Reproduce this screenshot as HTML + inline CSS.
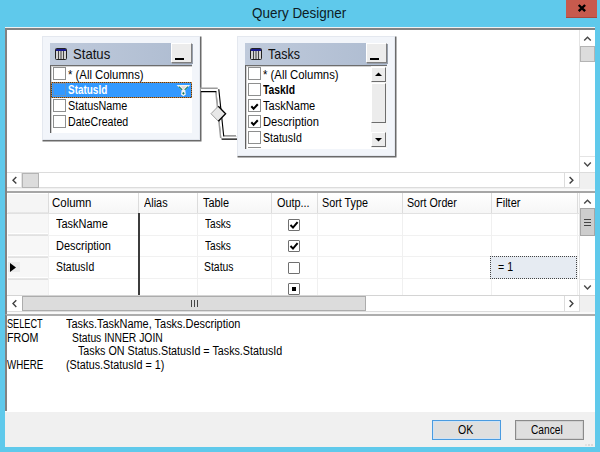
<!DOCTYPE html>
<html><head><meta charset="utf-8">
<style>
*{box-sizing:border-box;margin:0;padding:0}
html,body{width:600px;height:452px;overflow:hidden}
body{background:#5fc9eb;font-family:"Liberation Sans",sans-serif;font-size:12px;color:#000;position:relative}
.abs,.t,.b{position:absolute}
.t{white-space:nowrap;line-height:1;transform-origin:0 0}
#client{left:5px;top:27px;width:590px;height:420px;background:#f0f0f0}
#close{left:566px;top:0;width:31px;height:18px;background:#c75a4d;border-bottom:1px solid #a9473c}
.pane{background:#fff;border-top:2px solid #828282;border-left:2px solid #828282}
/* scrollbars */
.sb{background:#fff}
.sbtn{background:#fff;border:1px solid #dadada}
.thumb{background:#dcdcdc;border:1px solid #b4b4b4}
.corner{background:#f0f0f0}
/* table boxes */
.tbox{background:#f2f5fa;border:1px solid #e4e8ef;box-shadow:1px 1px 0 0.5px #6a6a6a}
.thead{background:linear-gradient(90deg,#bfcadb,#aebcd1);height:22px}
.ticon{position:absolute;left:5px;top:4.5px;width:12px;height:12px}
.minb{position:absolute;right:0;top:0;width:21px;height:20px;background:#ececec;border-top:1px solid #fff;border-left:1px solid #fff;border-right:1px solid #7e7e7e;border-bottom:1px solid #7e7e7e;box-shadow:1px 1px 0 #98a0ad}
.minb i{position:absolute;left:3px;top:14px;width:9px;height:2px;background:#000}
.list{background:#fff;border-top:1px solid #6d6d6d;border-left:1px solid #606060;box-shadow:inset 1px 1px 0 #d0d0d0;overflow:hidden}
.cb{position:absolute;width:13px;height:13px;border:1px solid #8e8f8f;background:#fff}
.ck{position:absolute;left:0;top:0}.ck12{position:absolute;left:0;top:0}
.selrow{background:#3399ff;box-shadow:inset 0 0 0 1px #4a3a2a;outline:1px dotted #c8853f;outline-offset:-1px}
/* 3d classic scroll buttons */
.c3{background:#ececec;border-top:1px solid #fff;border-left:1px solid #fff;border-right:1px solid #6d6d6d;border-bottom:1px solid #6d6d6d}
/* grid */
.hl{background:#f0f0f0;height:1px}
.vl{background:#e6e6e6;width:1px}
.rh{background:#f6f6f6;border:1px solid #fbfbfb}
#bottom{left:5px;top:411px;width:590px;height:36px;background:#f0f0f0;border-top:1px solid #fff}
.btn{height:20px;border:1px solid #acacac;background:#dfdfdf}
</style></head><body>
<div class="abs" id="client"></div>
<div class="abs" id="close"><svg width="31" height="18" viewBox="0 0 31 18"><path d="M12.7 5L19.1 11.2M19.1 5L12.7 11.2" stroke="#000" stroke-width="2.4"/></svg></div>

<!-- ===== diagram pane ===== -->
<div class="abs pane" style="left:5px;top:28px;width:590px;height:160px"></div>
<!-- v scrollbar -->
<div class="abs" style="left:579px;top:30px;width:1px;height:143px;background:#e4e4e4"></div>
<div class="abs thumb" style="left:580px;top:46px;width:15px;height:16px"></div>
<svg class="abs" style="left:580px;top:30px" width="15" height="16"><path d="M4.2 10.6L7.5 7.3L10.8 10.6" fill="none" stroke="#484848" stroke-width="1.4"/></svg>
<div class="abs" style="left:580px;top:156px;width:15px;height:1px;background:#e4e4e4"></div>
<svg class="abs" style="left:580px;top:157px" width="15" height="16"><path d="M4.2 5.6L7.5 8.9L10.8 5.6" fill="none" stroke="#484848" stroke-width="1.4"/></svg>
<!-- h scrollbar -->
<div class="abs" style="left:7px;top:172px;width:588px;height:1px;background:#dcdcdc"></div>
<div class="abs" style="left:7px;top:187px;width:573px;height:1px;background:#dcdcdc"></div>
<div class="abs corner" style="left:580px;top:173px;width:15px;height:15px"></div>
<div class="abs" style="left:579px;top:172px;width:1px;height:16px;background:#dcdcdc"></div>
<div class="abs" style="left:21px;top:173px;width:1px;height:14px;background:#e4e4e4"></div>
<div class="abs" style="left:564px;top:173px;width:1px;height:14px;background:#dcdcdc"></div>
<div class="abs thumb" style="left:22px;top:173px;width:17px;height:15px"></div>
<svg class="abs" style="left:7px;top:173px" width="15" height="15"><path d="M9.3 3.9L6 7.2L9.3 10.5" fill="none" stroke="#404040" stroke-width="1.4"/></svg>
<svg class="abs" style="left:565px;top:173px" width="15" height="15"><path d="M4.6 3.9L7.9 7.2L4.6 10.5" fill="none" stroke="#404040" stroke-width="1.4"/></svg>

<!-- Status box -->
<div class="abs tbox" style="left:42px;top:36px;width:158px;height:104px"></div>
<div class="abs thead" style="left:50px;top:43px;width:142px"><svg class="ticon" viewBox="0 0 12 12"><rect x="0.5" y="0.5" width="11" height="11" rx="1" fill="#d4d4d4" stroke="#222"/><rect x="1" y="1" width="10" height="2" fill="#1a1a8c"/><path d="M3.5 3v8M6 3v8M8.5 3v8" stroke="#444" stroke-width="1"/></svg><div class="minb"><i></i></div></div>
<div class="abs list" style="left:50px;top:65px;width:142px;height:68px"></div>
<div class="abs selrow" style="left:51px;top:82px;width:141px;height:16px"></div>
<div class="cb" style="left:53px;top:67px"></div>
<div class="cb" style="left:53px;top:83px;background:#3399ff;border-color:#5f93c9"></div>
<div class="cb" style="left:53px;top:99px"></div>
<div class="cb" style="left:53px;top:115px"></div>
<!-- filter icon -->
<svg class="abs" style="left:176px;top:84px" width="15" height="13" viewBox="0 0 15 13"><path d="M0.6 1H14.2L9.3 6.3L9.8 10.6L7.4 12.2L5 10.6L5.6 6.3z" fill="#f3f3f3"/><path d="M5 2.3H10L7.4 5.4z" fill="#e4d6d6"/><path d="M2.9 2.6L6.2 5.9M12 2.6L8.7 5.9" stroke="#1c7f5f" stroke-width="1.2" fill="none"/><path d="M7.4 7.9L8.7 9.3L7.4 10.7L6.1 9.3z" fill="#167a5c"/></svg>

<!-- Tasks box -->
<div class="abs tbox" style="left:237px;top:36px;width:158px;height:120px"></div>
<div class="abs thead" style="left:245px;top:43px;width:142px"><svg class="ticon" viewBox="0 0 12 12"><rect x="0.5" y="0.5" width="11" height="11" rx="1" fill="#d4d4d4" stroke="#222"/><rect x="1" y="1" width="10" height="2" fill="#1a1a8c"/><path d="M3.5 3v8M6 3v8M8.5 3v8" stroke="#444" stroke-width="1"/></svg><div class="minb"><i></i></div></div>
<div class="abs list" style="left:245px;top:65px;width:142px;height:84px"></div>
<div class="cb" style="left:248px;top:67px"></div>
<div class="cb" style="left:248px;top:83px"></div>
<div class="cb" style="left:248px;top:99px"><svg class="ck" width="11" height="11"><path d="M2.3 6.3L4.6 8.7L8.8 4.2" fill="none" stroke="#000" stroke-width="2"/></svg></div>
<div class="cb" style="left:248px;top:115px"><svg class="ck" width="11" height="11"><path d="M2.3 6.3L4.6 8.7L8.8 4.2" fill="none" stroke="#000" stroke-width="2"/></svg></div>
<div class="cb" style="left:248px;top:131px"></div>
<div class="abs" style="left:248px;top:147px;width:13px;height:1px;background:#8e8f8f"></div>
<!-- tasks list scrollbar -->
<div class="abs" style="left:371px;top:66px;width:16px;height:82px;background:#f4f4f4"></div>
<div class="abs c3" style="left:371px;top:67px;width:15px;height:15px"><svg width="13" height="13"><path d="M3 8h7L6.5 4.5z" fill="#000"/></svg></div>
<div class="abs c3" style="left:371px;top:83px;width:15px;height:40px"></div>
<div class="abs c3" style="left:371px;top:132px;width:15px;height:15px"><svg width="13" height="13"><path d="M3 5h7L6.5 8.5z" fill="#000"/></svg></div>

<!-- join -->
<svg class="abs" style="left:195px;top:80px" width="50" height="70" viewBox="195 80 50 70">
<path d="M200 89 L216.3 89 L221.3 136.5 L236 136.5" fill="none" stroke="#9c9c9c" stroke-width="3"/>
<path d="M201 90.8 L218 90.8 L223 138.3 L237 138.3" fill="none" stroke="#000" stroke-width="3"/>
<path d="M201 90 L217.3 90 L222.3 137.5 L237 137.5" fill="none" stroke="#fff" stroke-width="2"/>
<path d="M211 113.7 L218.3 106.2 L225.6 113.7 L218.3 121.2 Z" fill="#e8e8e8"/>
<path d="M218.3 121.2 L211 113.7 L218.3 106.2" fill="none" stroke="#a0a0a0" stroke-width="1"/>
<path d="M218.3 106.2 L225.6 113.7 L218.3 121.2" fill="none" stroke="#000" stroke-width="1.3"/>
</svg>

<!-- ===== grid pane ===== -->
<div class="abs" style="left:7px;top:189px;width:588px;height:2px;background:#f9f9f9"></div>
<div class="abs pane" style="left:5px;top:191px;width:590px;height:121px;border-top-color:#a6a6a6"></div>
<div class="abs" style="left:7px;top:193px;width:572px;height:20px;background:linear-gradient(#fff,#f6f6f6)"></div>
<div class="abs" style="left:8px;top:194px;width:40px;height:18px;background:#f5f5f5"></div>
<div class="abs" style="left:48px;top:193px;width:1px;height:20px;background:#dcdcdc"></div>
<div class="abs" style="left:138px;top:193px;width:1px;height:20px;background:#dcdcdc"></div>
<div class="abs" style="left:197px;top:193px;width:1px;height:20px;background:#dcdcdc"></div>
<div class="abs" style="left:271px;top:193px;width:1px;height:20px;background:#dcdcdc"></div>
<div class="abs" style="left:317px;top:193px;width:1px;height:20px;background:#dcdcdc"></div>
<div class="abs" style="left:402px;top:193px;width:1px;height:20px;background:#dcdcdc"></div>
<div class="abs" style="left:491px;top:193px;width:1px;height:20px;background:#dcdcdc"></div>
<div class="abs" style="left:577px;top:193px;width:1px;height:20px;background:#dcdcdc"></div>
<div class="abs" style="left:7px;top:213px;width:572px;height:1px;background:#e2e2e2"></div>
<div class="abs" style="left:48px;top:235px;width:531px;height:1px;background:#f1f1f1"></div>
<div class="abs" style="left:48px;top:256px;width:531px;height:1px;background:#f1f1f1"></div>
<div class="abs" style="left:48px;top:278px;width:531px;height:1px;background:#f1f1f1"></div>
<div class="abs" style="left:48px;top:214px;width:1px;height:82px;background:#f0f0f0"></div>
<div class="abs" style="left:197px;top:214px;width:1px;height:82px;background:#f0f0f0"></div>
<div class="abs" style="left:271px;top:214px;width:1px;height:82px;background:#f0f0f0"></div>
<div class="abs" style="left:317px;top:214px;width:1px;height:82px;background:#f0f0f0"></div>
<div class="abs" style="left:402px;top:214px;width:1px;height:82px;background:#f0f0f0"></div>
<div class="abs" style="left:491px;top:214px;width:1px;height:82px;background:#f0f0f0"></div>
<div class="abs" style="left:577px;top:214px;width:1px;height:82px;background:#f0f0f0"></div>
<div class="abs" style="left:138px;top:213px;width:2px;height:83px;background:#3c3c3c"></div>
<div class="abs" style="left:8px;top:214px;width:40px;height:19px;background:#f7f7f7"></div>
<div class="abs" style="left:8px;top:236px;width:40px;height:19px;background:#f7f7f7"></div>
<div class="abs" style="left:8px;top:258px;width:40px;height:19px;background:#f7f7f7"></div>
<div class="abs" style="left:8px;top:280px;width:40px;height:16px;background:#f7f7f7"></div>
<div class="abs" style="left:8px;top:212px;width:40px;height:2px;background:linear-gradient(#e9e9e9,#dedede)"></div>
<div class="abs" style="left:8px;top:234px;width:40px;height:2px;background:linear-gradient(#e9e9e9,#dedede)"></div>
<div class="abs" style="left:8px;top:256px;width:40px;height:2px;background:linear-gradient(#e9e9e9,#dedede)"></div>
<div class="abs" style="left:8px;top:278px;width:40px;height:2px;background:linear-gradient(#e9e9e9,#dedede)"></div>
<div class="abs" style="left:8px;top:262px;width:12px;height:10px;background:#ececec"></div>
<svg class="abs" style="left:10px;top:263px" width="6" height="9"><path d="M0 0L6 4.5L0 9z" fill="#000"/></svg>
<div class="cb" style="left:288px;top:219px;width:12px;height:12px;border-color:#707070;border-radius:1px"><svg class="ck12" width="10" height="10"><path d="M1.5 5L4 7.6L8.6 2.2" fill="none" stroke="#000" stroke-width="2"/></svg></div>
<div class="cb" style="left:288px;top:240px;width:12px;height:12px;border-color:#707070;border-radius:1px"><svg class="ck12" width="10" height="10"><path d="M1.5 5L4 7.6L8.6 2.2" fill="none" stroke="#000" stroke-width="2"/></svg></div>
<div class="cb" style="left:288px;top:262px;width:12px;height:12px;border-color:#707070;border-radius:1px"></div>
<div class="cb" style="left:288px;top:283px;width:12px;height:12px;border-color:#707070;border-radius:1px"><i style="position:absolute;left:3px;top:3px;width:4px;height:4px;background:#000"></i></div>
<div class="abs" style="left:490px;top:256px;width:87px;height:23px;background:#e6ebf2;border:1px dotted #444"></div>
<div class="abs" style="left:579px;top:193px;width:1px;height:103px;background:#e4e4e4"></div>
<svg class="abs" style="left:580px;top:193px" width="15" height="16"><path d="M4.2 10.6L7.5 7.3L10.8 10.6" fill="none" stroke="#484848" stroke-width="1.4"/></svg>
<div class="abs" style="left:580px;top:208px;width:15px;height:28px;background:#cdcdcd;border:1px solid #a6a6a6"></div>
<div class="abs" style="left:584px;top:218.5px;width:7px;height:1.5px;background:#444"></div>
<div class="abs" style="left:584px;top:221.5px;width:7px;height:1.5px;background:#444"></div>
<div class="abs" style="left:584px;top:224.5px;width:7px;height:1.5px;background:#444"></div>
<div class="abs" style="left:580px;top:279px;width:15px;height:1px;background:#e4e4e4"></div>
<svg class="abs" style="left:580px;top:280px" width="15" height="16"><path d="M4.2 5.6L7.5 8.9L10.8 5.6" fill="none" stroke="#484848" stroke-width="1.4"/></svg>
<div class="abs" style="left:7px;top:296px;width:588px;height:16px;background:#fff"></div>
<div class="abs" style="left:7px;top:295px;width:588px;height:1px;background:#d4d4d4"></div>
<div class="abs corner" style="left:580px;top:296px;width:15px;height:16px"></div>
<div class="abs" style="left:579px;top:296px;width:1px;height:16px;background:#dcdcdc"></div>
<div class="abs" style="left:564px;top:296px;width:1px;height:15px;background:#dcdcdc"></div>
<div class="abs" style="left:7px;top:311px;width:573px;height:1px;background:#dcdcdc"></div>
<div class="abs thumb" style="left:22px;top:296px;width:344px;height:15px;border-color:#acacac"></div>
<div class="abs" style="left:191px;top:300px;width:1.4px;height:7px;background:#444"></div>
<div class="abs" style="left:194px;top:300px;width:1.4px;height:7px;background:#444"></div>
<div class="abs" style="left:197px;top:300px;width:1.4px;height:7px;background:#444"></div>
<svg class="abs" style="left:7px;top:296px" width="15" height="15"><path d="M9.3 4.3L6 7.6L9.3 10.9" fill="none" stroke="#404040" stroke-width="1.4"/></svg>
<svg class="abs" style="left:565px;top:296px" width="15" height="15"><path d="M4.6 4.3L7.9 7.6L4.6 10.9" fill="none" stroke="#404040" stroke-width="1.4"/></svg>

<div class="abs" style="left:5px;top:28px;width:2px;height:383px;background:#828282"></div>
<!-- ===== sql pane ===== -->
<div class="abs" style="left:7px;top:312px;width:588px;height:2px;background:#f9f9f9"></div>
<div class="abs" style="left:5px;top:314px;width:590px;height:97px;background:#fff;border-top:2px solid #adadad;border-left:2px solid #828282"></div>

<div class="abs" id="bottom"></div>
<div class="abs btn" style="left:432px;top:420px;width:69px;border-color:#4a9be0;box-shadow:inset 0 0 0 1px #cfe3f5"></div>
<div class="abs btn" style="left:515px;top:420px;width:69px;border-color:#8a8a8a;box-shadow:inset 0 0 0 1px #d0d0d0"></div>
<div class="abs" style="left:588px;top:444px;width:2px;height:2px;background:#d9d9d9;box-shadow:3px 0 0 #d9d9d9,-3px 0 0 #e2e2e2"></div>
<span class="t" style="left:251.5px;top:5px;font-size:15px;transform:scaleX(0.897);color:#0d1b24">Query Designer</span>
<span class="t" style="left:72.8px;top:46px;font-size:15px;transform:scaleX(0.876);color:#111">Status</span>
<span class="t" style="left:268.4px;top:46px;font-size:15px;transform:scaleX(0.831);color:#111">Tasks</span>
<span class="t" style="left:67.7px;top:69px;font-size:12px;transform:scaleX(0.945)">* (All Columns)</span>
<span class="t" style="left:68.4px;top:84px;font-size:12px;transform:scaleX(0.829);font-weight:bold;color:#fff">StatusId</span>
<span class="t" style="left:68.4px;top:100px;font-size:12px;transform:scaleX(0.898)">StatusName</span>
<span class="t" style="left:68.4px;top:116px;font-size:12px;transform:scaleX(0.886)">DateCreated</span>
<span class="t" style="left:263.0px;top:69px;font-size:12px;transform:scaleX(0.945)">* (All Columns)</span>
<span class="t" style="left:263.0px;top:84px;font-size:12px;transform:scaleX(0.861);font-weight:bold">TaskId</span>
<span class="t" style="left:263.0px;top:100px;font-size:12px;transform:scaleX(0.922)">TaskName</span>
<span class="t" style="left:263.0px;top:116px;font-size:12px;transform:scaleX(0.933)">Description</span>
<span class="t" style="left:263.0px;top:132px;font-size:12px;transform:scaleX(0.883)">StatusId</span>
<span class="t" style="left:52.3px;top:197px;font-size:12px;transform:scaleX(0.955)">Column</span>
<span class="t" style="left:143.5px;top:197px;font-size:12px;transform:scaleX(0.906)">Alias</span>
<span class="t" style="left:202.8px;top:197px;font-size:12px;transform:scaleX(0.905)">Table</span>
<span class="t" style="left:277.2px;top:197px;font-size:12px;transform:scaleX(0.904)">Outp...</span>
<span class="t" style="left:322.2px;top:197px;font-size:12px;transform:scaleX(0.897)">Sort Type</span>
<span class="t" style="left:407.2px;top:197px;font-size:12px;transform:scaleX(0.890)">Sort Order</span>
<span class="t" style="left:496.0px;top:197px;font-size:12px;transform:scaleX(0.918)">Filter</span>
<span class="t" style="left:55.5px;top:218px;font-size:12px;transform:scaleX(0.913)">TaskName</span>
<span class="t" style="left:55.5px;top:240px;font-size:12px;transform:scaleX(0.916)">Description</span>
<span class="t" style="left:55.5px;top:261px;font-size:12px;transform:scaleX(0.869)">StatusId</span>
<span class="t" style="left:204.5px;top:218px;font-size:12px;transform:scaleX(0.846)">Tasks</span>
<span class="t" style="left:204.5px;top:240px;font-size:12px;transform:scaleX(0.846)">Tasks</span>
<span class="t" style="left:204.1px;top:261px;font-size:12px;transform:scaleX(0.869)">Status</span>
<span class="t" style="left:497.8px;top:261px;font-size:12px;transform:scaleX(0.885)">= 1</span>
<span class="t" style="left:7.0px;top:318px;font-size:12px;transform:scaleX(0.765)">SELECT</span>
<span class="t" style="left:66.0px;top:318px;font-size:12px;transform:scaleX(0.912)">Tasks.TaskName, Tasks.Description</span>
<span class="t" style="left:7.0px;top:332px;font-size:12px;transform:scaleX(0.891)">FROM</span>
<span class="t" style="left:72.0px;top:332px;font-size:12px;transform:scaleX(0.861)">Status INNER JOIN</span>
<span class="t" style="left:78.0px;top:345px;font-size:12px;transform:scaleX(0.895)">Tasks ON Status.StatusId = Tasks.StatusId</span>
<span class="t" style="left:7.0px;top:359px;font-size:12px;transform:scaleX(0.811)">WHERE</span>
<span class="t" style="left:66.0px;top:359px;font-size:12px;transform:scaleX(0.896)">(Status.StatusId = 1)</span>
<span class="t" style="left:457.7px;top:424px;font-size:12px;transform:scaleX(0.880)">OK</span>
<span class="t" style="left:531.1px;top:424px;font-size:12px;transform:scaleX(0.847)">Cancel</span>
</body></html>
